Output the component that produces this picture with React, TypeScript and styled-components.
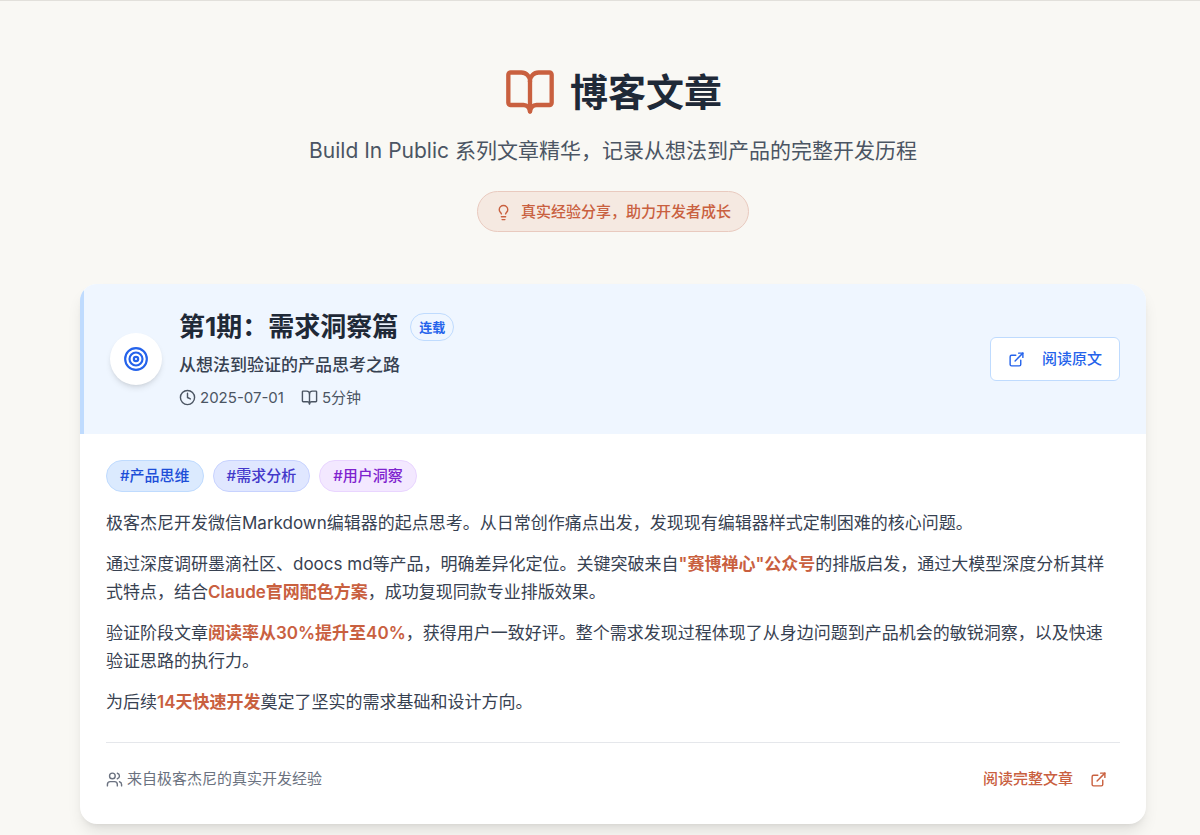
import React from "react";
import styled, { createGlobalStyle } from "styled-components";
import {
  BookOpen,
  Clock,
  ExternalLink,
  Lightbulb,
  Target,
  Users,
} from "lucide-react";

const GlobalStyle = createGlobalStyle`
  *, *::before, *::after { box-sizing: border-box; }
  body {
    margin: 0;
    background: #f9f8f4;
    color: #1f2937;
    font-family: Inter, "Noto Sans CJK SC", sans-serif;
  }
  h1, h2, p { margin: 0; }
  svg { flex-shrink: 0; display: block; }
`;

const Page = styled.div`
  border-top: 1px solid #e2e0db;
  padding: 64px 54px 11px 80px;
`;

const Hero = styled.header`
  display: flex;
  flex-direction: column;
  align-items: center;
  margin-bottom: 52px;
`;

const HeroTitle = styled.h1`
  display: flex;
  align-items: center;
  gap: 14px;
  font-size: 38px;
  font-weight: 700;
  line-height: 54px;

  svg { color: #c9603f; }
`;

const HeroText = styled.p`
  margin-top: 15px;
  font-size: 21px;
  line-height: 34px;
  color: #4b5563;
`;

const HeroPill = styled.div`
  display: flex;
  align-items: center;
  gap: 9px;
  margin-top: 23px;
  padding: 10px 17px 9px;
  border: 1px solid #e9cabf;
  border-radius: 999px;
  background: #f5e9e1;
  color: #c9603f;
  font-size: 15px;
  font-weight: 500;
  line-height: 20px;
`;

const Card = styled.article`
  border-radius: 17px;
  overflow: hidden;
  background: #fff;
  box-shadow: 0 10px 16px -3px rgba(0, 0, 0, 0.1), 0 4px 6px -4px rgba(0, 0, 0, 0.1);
`;

const CardHeader = styled.div`
  display: flex;
  align-items: center;
  gap: 17px;
  min-height: 150px;
  padding: 24px 26px;
  border-left: 4px solid #bfdbfe;
  background: #eff6ff;
`;

const IconDisc = styled.div`
  display: flex;
  align-items: center;
  justify-content: center;
  flex-shrink: 0;
  width: 52px;
  height: 52px;
  border-radius: 50%;
  background: #fff;
  color: #2563eb;
  box-shadow: 0 4px 6px -1px rgba(0, 0, 0, 0.1), 0 2px 4px -2px rgba(0, 0, 0, 0.1);
`;

const Heading = styled.div`
  flex: 1;
  min-width: 0;
`;

const TitleRow = styled.div`
  display: flex;
  align-items: center;
  gap: 12px;
`;

const CardTitle = styled.h2`
  font-size: 26px;
  font-weight: 700;
  line-height: 34px;
`;

const SeriesBadge = styled.span`
  padding: 0 8px;
  border: 1px solid #bfdbfe;
  border-radius: 999px;
  color: #2563eb;
  font-size: 13px;
  font-weight: 600;
  line-height: 26px;
`;

const CardSubtitle = styled.p`
  margin-top: 7px;
  color: #374151;
  font-size: 17px;
  font-weight: 500;
  line-height: 28px;
`;

const Meta = styled.div`
  display: flex;
  gap: 17px;
  margin-top: 8px;
  color: #4b5563;
  font-size: 15px;
  line-height: 22px;
`;

const IconText = styled.span`
  display: flex;
  align-items: center;
  gap: 4px;
`;

const OutlineButton = styled.button`
  display: flex;
  align-items: center;
  gap: 17px;
  padding: 11px 17px;
  border: 1px solid #bfdbfe;
  border-radius: 6px;
  background: #fff;
  color: #2563eb;
  font: inherit;
  font-size: 15px;
  font-weight: 500;
  line-height: 20px;
  cursor: pointer;
`;

const CardBody = styled.div`
  padding: 26px;
`;

const Tags = styled.div`
  display: flex;
  gap: 9px;
`;

const tones = {
  blue: ["#dbeafe", "#bfdbfe", "#1d4ed8"],
  indigo: ["#e0e7ff", "#c7d2fe", "#4338ca"],
  purple: ["#f3e8ff", "#e9d5ff", "#7e22ce"],
};

const Tag = styled.span<{ $tone: keyof typeof tones }>`
  padding: 0 13px;
  border: 1px solid ${(p) => tones[p.$tone][1]};
  border-radius: 999px;
  background: ${(p) => tones[p.$tone][0]};
  color: ${(p) => tones[p.$tone][2]};
  font-size: 15px;
  font-weight: 500;
  line-height: 30px;
`;

const Prose = styled.div`
  display: flex;
  flex-direction: column;
  gap: 13px;
  margin-top: 17px;
  padding-right: 4px;
  color: #374151;
  font-size: 17px;
  line-height: 28px;

  strong {
    color: #c9603f;
    font-weight: 600;
  }
`;

const CardFooter = styled.div`
  display: flex;
  align-items: center;
  justify-content: space-between;
  margin-top: 26px;
  padding-top: 17px;
  border-top: 1px solid #e5e7eb;
  color: #6b7280;
  font-size: 15px;
  line-height: 20px;
`;

const ReadLink = styled.a`
  display: flex;
  align-items: center;
  gap: 17px;
  padding: 9px 13px;
  color: #c9603f;
  font-weight: 500;
  text-decoration: none;
`;

export default function App() {
  return (
    <>
      <GlobalStyle />
      <Page>
        <Hero>
          <HeroTitle>
            <BookOpen size={52} />
            博客文章
          </HeroTitle>
          <HeroText>Build In Public 系列文章精华，记录从想法到产品的完整开发历程</HeroText>
          <HeroPill>
            <Lightbulb size={17} />
            真实经验分享，助力开发者成长
          </HeroPill>
        </Hero>
        <main>
          <Card>
            <CardHeader>
              <IconDisc>
                <Target size={26} />
              </IconDisc>
              <Heading>
                <TitleRow>
                  <CardTitle>第1期：需求洞察篇</CardTitle>
                  <SeriesBadge>连载</SeriesBadge>
                </TitleRow>
                <CardSubtitle>从想法到验证的产品思考之路</CardSubtitle>
                <Meta>
                  <IconText>
                    <Clock size={17} />
                    <time dateTime="2025-07-01">2025-07-01</time>
                  </IconText>
                  <IconText>
                    <BookOpen size={17} />
                    5分钟
                  </IconText>
                </Meta>
              </Heading>
              <OutlineButton type="button">
                <ExternalLink size={17} />
                阅读原文
              </OutlineButton>
            </CardHeader>
            <CardBody>
              <Tags>
                <Tag $tone="blue">#产品思维</Tag>
                <Tag $tone="indigo">#需求分析</Tag>
                <Tag $tone="purple">#用户洞察</Tag>
              </Tags>
              <Prose>
                <p>极客杰尼开发微信Markdown编辑器的起点思考。从日常创作痛点出发，发现现有编辑器样式定制困难的核心问题。</p>
                <p>
                  通过深度调研墨滴社区、doocs md等产品，明确差异化定位。关键突破来自<strong>"赛博禅心"公众号</strong>的排版启发，通过大模型深度分析其样式特点，结合<strong>Claude官网配色方案</strong>，成功复现同款专业排版效果。
                </p>
                <p>
                  验证阶段文章<strong>阅读率从30%提升至40%</strong>，获得用户一致好评。整个需求发现过程体现了从身边问题到产品机会的敏锐洞察，以及快速验证思路的执行力。
                </p>
                <p>
                  为后续<strong>14天快速开发</strong>奠定了坚实的需求基础和设计方向。
                </p>
              </Prose>
              <CardFooter>
                <IconText>
                  <Users size={17} />
                  来自极客杰尼的真实开发经验
                </IconText>
                <ReadLink href="#article">
                  阅读完整文章
                  <ExternalLink size={17} />
                </ReadLink>
              </CardFooter>
            </CardBody>
          </Card>
        </main>
      </Page>
    </>
  );
}
